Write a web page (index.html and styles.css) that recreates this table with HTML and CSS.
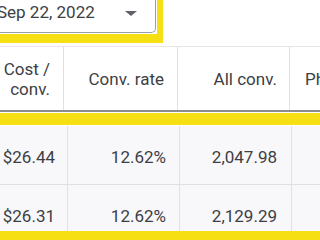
FILE: index.html
```html
<!DOCTYPE html>
<html>
<head>
<meta charset="utf-8">
<link rel="stylesheet" href="styles.css">
</head>
<body>
<div class="top">
  <div class="hl-top">
    <div class="dropdown">
      <span class="date">Sep 22, 2022</span>
      <span class="caret"></span>
    </div>
  </div>
</div>
<div class="head">
  <div class="hc c1">Cost /<br>conv.</div>
  <div class="hc c2">Conv. rate</div>
  <div class="hc c3">All conv.</div>
  <div class="hc c4 left">Ph</div>
</div>
<div class="hl-rows">
  <div class="rows">
    <div class="row">
      <div class="bc b1">$26.44</div>
      <div class="bc b2">12.62%</div>
      <div class="bc b3">2,047.98</div>
      <div class="bc b4"></div>
    </div>
    <div class="row">
      <div class="bc b1">$26.31</div>
      <div class="bc b2">12.62%</div>
      <div class="bc b3">2,129.29</div>
      <div class="bc b4"></div>
    </div>
  </div>
</div>
</body>
</html>
```

FILE: styles.css
```css
html, body {
  margin: 0;
  padding: 0;
  background: #ffffff;
  width: 320px;
  height: 240px;
  overflow: hidden;
  font-family: Roboto, "Liberation Sans", sans-serif;
  color: #3c4043;
}

.top {
  height: 46px;
}

.hl-top {
  width: 157px;
  height: 34px;
  border-right: 6px solid #f6e013;
  border-bottom: 9px solid #f6e013;
  box-sizing: content-box;
}

.dropdown {
  width: 155px;
  height: 32px;
  background: #fff;
  border-right: 1px solid #9aa0a6;
  border-bottom: 1px solid #9aa0a6;
  border-bottom-right-radius: 5px;
  display: flex;
  align-items: flex-start;
  box-sizing: content-box;
}

.date {
  font-size: 17px;
  line-height: 20px;
  margin-left: -3px;
  padding-top: 2px;
}

.caret {
  margin-left: auto;
  margin-right: 18px;
  margin-top: 11px;
  width: 0;
  height: 0;
  border-left: 6px solid transparent;
  border-right: 6px solid transparent;
  border-top: 5px solid #5f6368;
}

.head {
  display: flex;
  height: 63px;
  border-top: 1px solid #e6e6e8;
  border-bottom: 2px solid #8d8d8f;
  background: #fff;
}

.hc {
  display: flex;
  align-items: center;
  justify-content: flex-end;
  text-align: right;
  font-size: 17px;
  line-height: 20px;
  padding-right: 13px;
  border-right: 1px solid #e0e0e3;
  box-sizing: border-box;
  padding-top: 1px;
}

.c1 { width: 64px; }
.c2 { width: 114px; }
.c3 { width: 112px; padding-right: 12px; }
.c4 {
  flex: 1;
  border-right: none;
  justify-content: flex-start;
  padding-left: 15px;
  white-space: nowrap;
  overflow: hidden;
}

.hl-rows {
  margin-top: 1px;
  border-top: 12px solid #f6e013;
  border-bottom: 12px solid #f6e013;
  padding-top: 1px;
  background: #fff;
}

.rows {
  height: 105px;
  overflow: hidden;
}

.row {
  display: flex;
  height: 58px;
  border-bottom: 1px solid #e0e0e3;
  background: #f8f8fb;
}

.bc {
  display: flex;
  align-items: center;
  justify-content: flex-end;
  font-size: 17px;
  line-height: 20px;
  padding-top: 3px;
  padding-right: 12px;
  border-right: 1px solid #e0e0e3;
  box-sizing: border-box;
}

.b1 { width: 68px; }
.b2 { width: 112px; padding-right: 13px; }
.b3 { width: 112px; padding-right: 14px; }
.b4 { flex: 1; border-right: none; }
```
